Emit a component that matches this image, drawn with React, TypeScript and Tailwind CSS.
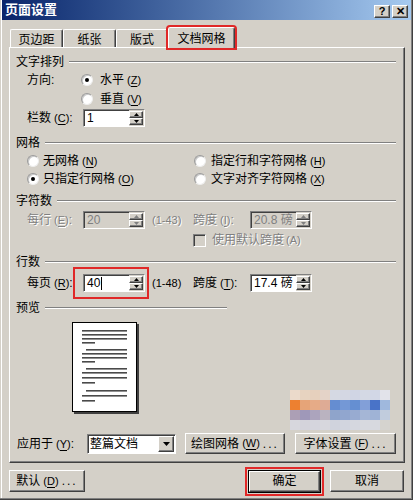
import React from "react";

const raised =
  "border border-t-white border-l-white border-r-[#404040] border-b-[#404040] shadow-[inset_-1px_-1px_0_#808080]";
const sunken =
  "border border-t-[#808080] border-l-[#808080] border-r-white border-b-white shadow-[inset_1px_1px_0_#404040]";
const gray = "text-[#808080] [text-shadow:1px_1px_0_#ffffff]";

function U({ c }: { c: string }) {
  return (
    <span className="ml-[3px] text-[11px]">
      (<span className="underline underline-offset-2">{c}</span>)
    </span>
  );
}

function Group({ title, w }: { title: string; w?: string }) {
  return (
    <div className={`flex items-center h-[14px] pl-[6px] ${w ?? "pr-[8px]"}`}>
      <span className="text-[12px] leading-[14px]">{title}</span>
      <div className="flex-1 ml-[5px] h-[2px] border-t border-t-[#808080] border-b border-b-white" />
    </div>
  );
}

function Radio({ checked }: { checked?: boolean }) {
  return (
    <span className="w-[12px] h-[12px] shrink-0 rounded-full bg-white border border-t-[#9a9a9a] border-l-[#9a9a9a] border-r-[#eeeeee] border-b-[#eeeeee] shadow-[inset_1px_1px_0_#c8c8c8] flex items-center justify-center">
      {checked && <span className="w-[4px] h-[4px] rounded-full bg-black" />}
    </span>
  );
}

function Tri({ up, color }: { up?: boolean; color: string }) {
  return (
    <svg width="5" height="3" viewBox="0 0 5 3">
      {up ? <polygon points="2.5,0 5,3 0,3" fill={color} /> : <polygon points="0,0 5,0 2.5,3" fill={color} />}
    </svg>
  );
}

function Spin({ value, disabled, caret }: { value: string; disabled?: boolean; caret?: boolean }) {
  const c = disabled ? "#808080" : "#000000";
  return (
    <div className={`flex w-[62px] h-[18px] ${sunken} ${disabled ? "bg-[#d4d0c8]" : "bg-white"}`}>
      <div className={`flex-1 flex items-center pl-[3px] text-[12px] leading-[14px] whitespace-nowrap overflow-hidden ${disabled ? "text-[#808080]" : "text-black"}`}>
        {value}
        {caret && <span className="inline-block w-[1px] h-[13px] bg-black ml-[1px]" />}
      </div>
      <div className="flex flex-col w-[15px] py-[1px] pr-[1px] bg-[#d4d0c8]">
        <div className={`h-[7px] flex items-center justify-center bg-[#d4d0c8] ${raised}`}>
          <Tri up color={c} />
        </div>
        <div className={`h-[7px] flex items-center justify-center bg-[#d4d0c8] ${raised}`}>
          <Tri color={c} />
        </div>
      </div>
    </div>
  );
}

function Btn({ children, w, cls }: { children: React.ReactNode; w: string; cls?: string }) {
  return (
    <div className={`${w} h-[21px] flex items-center justify-center bg-[#d4d0c8] text-[12px] ${raised} ${cls ?? ""}`}>
      {children}
    </div>
  );
}

function Preview() {
  const rows: [number, "L" | "S" | "I"][] = [
    [8, "L"], [12, "L"], [16, "L"], [20, "S"],
    [27, "I"], [31, "L"], [35, "L"], [39, "S"],
    [46, "I"], [50, "L"], [55, "L"], [60, "S"],
    [68, "I"], [73, "L"], [78, "S"],
  ];
  return (
    <svg width="67" height="92" viewBox="0 0 67 92">
      <rect x="0.5" y="0.5" width="64" height="89" fill="#ffffff" stroke="#000000" />
      <rect x="65" y="2" width="2" height="90" fill="#404040" />
      <rect x="2" y="90" width="65" height="2" fill="#404040" />
      {rows.map(([y, t], i) => (
        <rect key={i} x={t === "I" ? 14 : 10} y={y} width={t === "S" ? 13 : t === "I" ? 41 : 45} height="1.6" fill="#4a4a4a" />
      ))}
    </svg>
  );
}

const wm = [
  ["#eedccc", "#ead4c0", "#e8d0bc", "#e6d4c8", "#d6dae6", "#d4d8e6", "#d0d6e8", "#d4dae8", "#d2d8ea", "#e4e6ee"],
  ["#f07820", "#e8a070", "#e8a880", "#e0a890", "#5a86d2", "#6a92d8", "#5a88d4", "#7a9ada", "#3a6ac8", "#9ab6e0"],
  ["#a89ab4", "#9a92b8", "#a8a0bc", "#b8b0c0", "#88a0cc", "#8aa2d0", "#92a8d2", "#a0b4d8", "#9ab0d8", "#c0cce0"],
  ["#d8d8e0", "#d4d4de", "#d6d6e0", "#d8d8e0", "#d0d4e0", "#d2d6e2", "#d6d8e2", "#d8dae2", "#d8dae2", "#d6d4d0"],
];

export default function App() {
  return (
    <div className="relative w-[413px] h-[500px] bg-[#d4d0c8] px-[2px] pb-[2px] shadow-[inset_-1px_-1px_0_#404040,inset_-2px_-2px_0_#808080,inset_1px_0_0_#d4d0c8,inset_2px_0_0_#ffffff] text-black [font-family:'Liberation_Sans','Noto_Sans_CJK_SC',sans-serif] overflow-hidden">
      {/* title bar */}
      <div className="h-[20px] flex items-center justify-between pl-[3px] pr-[3px] bg-gradient-to-r from-[#0a246a] to-[#a6caf0]">
        <span className="text-white font-bold text-[13px] leading-[16px]">页面设置</span>
        <div className="flex gap-[2px] mt-[3px]">
          <div className={`w-[16px] h-[13px] bg-[#d4d0c8] ${raised} flex items-center justify-center text-[11px] font-bold leading-none`}>?</div>
          <div className={`w-[16px] h-[13px] bg-[#d4d0c8] ${raised} flex items-center justify-center text-[11px] font-bold leading-none`}>✕</div>
        </div>
      </div>

      <div className="pl-[7px]">
        {/* tabs */}
        <div className="flex items-end h-[27px] pl-[1px] relative z-10">
          <div className="w-[53px] h-[18px] pt-[2px] flex items-center justify-center text-[12px] border-t border-l border-t-white border-l-white border-r border-r-[#404040] shadow-[inset_-1px_0_0_#808080] rounded-t-[2px]">页边距</div>
          <div className="w-[53px] h-[18px] pt-[2px] flex items-center justify-center text-[12px] border-t border-l border-t-white border-l-white border-r border-r-[#404040] shadow-[inset_-1px_0_0_#808080] rounded-t-[2px]">纸张</div>
          <div className="w-[52px] h-[18px] pt-[2px] flex items-center justify-center text-[12px] border-t border-l border-t-white border-l-white border-r border-r-[#404040] shadow-[inset_-1px_0_0_#808080] rounded-t-[2px]">版式</div>
          <div className="w-[67px] h-[21px] -mb-[1px] pt-[1px] bg-[#d4d0c8] flex items-center justify-center text-[12px] border-t border-l border-t-white border-l-white border-r border-r-[#404040] shadow-[inset_-1px_0_0_#808080] rounded-t-[2px] outline-2 outline-[#e02828]">文档网格</div>
        </div>

        {/* panel */}
        <div className="w-[396px] h-[416px] border border-t-white border-l-white border-r-[#404040] border-b-[#404040] shadow-[inset_-1px_-1px_0_#808080] flex flex-col">
          <div className="mt-[7px]">
            <Group title="文字排列" />
          </div>
          <div className="flex items-center h-[19px] mt-[1px] pl-[17px] text-[12px]">
            <span className="w-[54px]">方向:</span>
            <Radio checked />
            <span className="ml-[7px]">水平<U c="Z" /></span>
          </div>
          <div className="flex items-center h-[19px] pl-[71px] text-[12px]">
            <Radio />
            <span className="ml-[7px]">垂直<U c="V" /></span>
          </div>
          <div className="flex items-center h-[18px] mt-[1px] pl-[17px] text-[12px]">
            <span className="w-[56px]">栏数<U c="C" />:</span>
            <Spin value="1" />
          </div>

          <div className="mt-[9px]">
            <Group title="网格" />
          </div>
          <div className="flex items-center h-[18px] mt-[2px] pl-[17px] text-[12px]">
            <div className="w-[167px] flex items-center">
              <Radio />
              <span className="ml-[4px]">无网格<U c="N" /></span>
            </div>
            <Radio />
            <span className="ml-[5px]">指定行和字符网格<U c="H" /></span>
          </div>
          <div className="flex items-center h-[17px] pl-[17px] text-[12px]">
            <div className="w-[167px] flex items-center">
              <Radio checked />
              <span className="ml-[4px]">只指定行网格<U c="O" /></span>
            </div>
            <Radio />
            <span className="ml-[5px]">文字对齐字符网格<U c="X" /></span>
          </div>

          <div className="mt-[7px]">
            <Group title="字符数" />
          </div>
          <div className="flex items-center h-[18px] mt-[3px] pl-[17px] text-[12px]">
            <span className={`w-[56px] ${gray}`}>每行<U c="E" />:</span>
            <Spin value="20" disabled />
            <span className={`w-[41px] ml-[7px] text-[11px] ${gray}`}>(1-43)</span>
            <span className={`w-[57px] ${gray}`}>跨度<U c="I" />:</span>
            <Spin value="20.8 磅" disabled />
          </div>
          <div className="flex items-center h-[16px] mt-[3px] pl-[183px] text-[12px]">
            <span className={`w-[13px] h-[13px] bg-[#d4d0c8] ${sunken}`} />
            <span className={`ml-[6px] ${gray}`}>使用默认跨度<span className="ml-[2px] text-[11px]">(A)</span></span>
          </div>

          <div className="mt-[7px]">
            <Group title="行数" />
          </div>
          <div className="flex items-center h-[18px] mt-[5px] pl-[17px] text-[12px]">
            <span className="w-[56px]">每页<U c="R" />:</span>
            <div className="relative">
              <Spin value="40" caret />
              <div className="absolute -left-[10px] -top-[7px] -right-[4px] -bottom-[7px] border-2 border-[#e02828]" />
            </div>
            <span className="w-[41px] ml-[7px] text-[11px]">(1-48)</span>
            <span className="w-[57px]">跨度<U c="T" />:</span>
            <Spin value="17.4 磅" />
          </div>

          <div className="mt-[9px]">
            <Group title="预览" w="w-[217px]" />
          </div>
          <div className="mt-[7px] pl-[62px] h-[92px]">
            <Preview />
          </div>

          <div className="flex items-center h-[21px] mt-[19px] pl-[7px] text-[12px]">
            <span className="w-[70px]">应用于<U c="Y" />:</span>
            <div className={`w-[89px] h-[20px] bg-white flex ${sunken}`}>
              <span className="flex-1 flex items-center pl-[2px] text-[12px]">整篇文档</span>
              <div className="p-[1px] pl-0">
                <div className={`w-[16px] h-full bg-[#d4d0c8] flex items-center justify-center ${raised}`}>
                  <svg width="7" height="4" viewBox="0 0 7 4">
                    <polygon points="0,0 7,0 3.5,4" fill="#000" />
                  </svg>
                </div>
              </div>
            </div>
            <Btn w="w-[100px] ml-[9px]">绘图网格<U c="W" /><span className="ml-[3px] tracking-[2px]">...</span></Btn>
            <Btn w="w-[101px] ml-[10px]">字体设置<U c="F" /><span className="ml-[3px] tracking-[2px]">...</span></Btn>
          </div>
        </div>

        {/* bottom buttons */}
        <div className="flex items-center mt-[7px] h-[22px]">
          <Btn w="w-[76px] h-[22px]">默认<U c="D" /><span className="ml-[3px] tracking-[2px]">...</span></Btn>
          <div className="ml-[163px] w-[73px] h-[23px] border border-black outline-2 outline-offset-[1px] outline-[#e02828] flex">
            <Btn w="w-full h-full">确定</Btn>
          </div>
          <Btn w="w-[74px] h-[22px] ml-[9px]">取消</Btn>
        </div>
      </div>

      {/* pixelated watermark overlay */}
      <div className="absolute left-[290px] top-[390px] grid grid-cols-10 w-[100px] h-[40px] opacity-90">
        {wm.flat().map((c, i) => (
          <div key={i} style={{ backgroundColor: c }} />
        ))}
      </div>
    </div>
  );
}
